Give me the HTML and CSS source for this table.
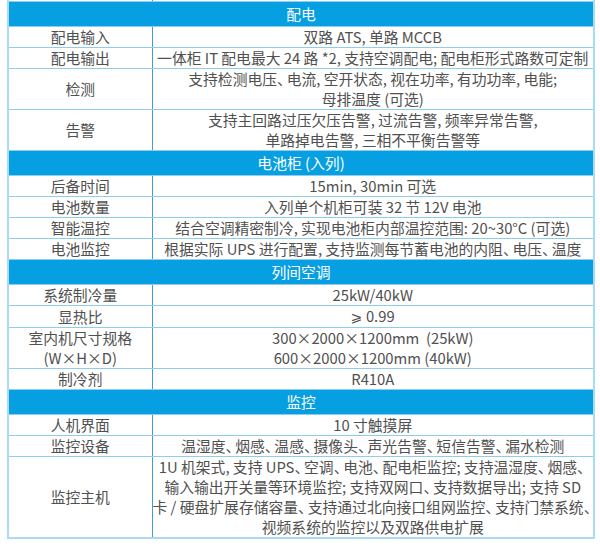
FILE: index.html
```html
<!DOCTYPE html>
<html lang="zh-CN">
<head>
<meta charset="utf-8">
<title>配置表</title>
<link rel="stylesheet" href="styles.css">
</head>
<body>
<table class="spec">
  <colgroup><col class="c1"><col class="c2"></colgroup>
  <tr class="stub"><td></td><td></td></tr>
  <tr class="sec"><td colspan="2">配电</td></tr>
  <tr><td>配电输入</td><td>双路 ATS, 单路 MCCB</td></tr>
  <tr><td>配电输出</td><td>一体柜 IT 配电最大 24 路 *2, 支持空调配电; 配电柜形式路数可定制</td></tr>
  <tr><td>检测</td><td>支持检测电压<span class="d">、</span>电流, 空开状态, 视在功率, 有功功率, 电能;<br>母排温度 (可选)</td></tr>
  <tr><td>告警</td><td>支持主回路过压欠压告警, 过流告警, 频率异常告警,<br>单路掉电告警, 三相不平衡告警等</td></tr>
  <tr class="sec"><td colspan="2">电池柜 (入列)</td></tr>
  <tr><td>后备时间</td><td>15min, 30min 可选</td></tr>
  <tr><td>电池数量</td><td>入列单个机柜可装 32 节 12V 电池</td></tr>
  <tr><td>智能温控</td><td>结合空调精密制冷, 实现电池柜内部温控范围: 20~30°C (可选)</td></tr>
  <tr><td>电池监控</td><td>根据实际 UPS 进行配置, 支持监测每节蓄电池的内阻<span class="d">、</span>电压<span class="d">、</span>温度</td></tr>
  <tr class="sec"><td colspan="2">列间空调</td></tr>
  <tr><td>系统制冷量</td><td>25kW/40kW</td></tr>
  <tr><td>显热比</td><td><span class="ge">⩾</span> 0.99</td></tr>
  <tr><td>室内机尺寸规格<br>(W×H×D)</td><td>300×2000×1200mm &nbsp;(25kW)<br>600×2000×1200mm (40kW)</td></tr>
  <tr><td>制冷剂</td><td>R410A</td></tr>
  <tr class="sec"><td colspan="2">监控</td></tr>
  <tr><td>人机界面</td><td>10 寸触摸屏</td></tr>
  <tr><td>监控设备</td><td>温湿度<span class="d">、</span>烟感<span class="d">、</span>温感<span class="d">、</span>摄像头<span class="d">、</span>声光告警<span class="d">、</span>短信告警<span class="d">、</span>漏水检测</td></tr>
  <tr><td>监控主机</td><td>1U 机架式, 支持 UPS<span class="d">、</span>空调<span class="d">、</span>电池<span class="d">、</span>配电柜监控; 支持温湿度<span class="d">、</span>烟感<span class="d">、</span><br>输入输出开关量等环境监控; 支持双网口<span class="d">、</span>支持数据导出; 支持 SD<br>卡 / 硬盘扩展存储容量<span class="d">、</span>支持通过北向接口组网监控<span class="d">、</span>支持门禁系统<span class="d">、</span><br>视频系统的监控以及双路供电扩展</td></tr>
</table>
</body>
</html>
```

FILE: styles.css
```css
html, body {
  margin: 0;
  padding: 0;
  background: #ffffff;
}

.spec {
  margin-left: 7px;
  width: 588px;
  border-collapse: collapse;
  table-layout: fixed;
  border: 2px solid #a9dbf5;
  border-top: none;
  font-family: "Noto Sans CJK SC", "Noto Sans", sans-serif;
  font-weight: 400;
  font-size: 14.8px;
  font-feature-settings: "halt";
  color: #505050;
}

.c1 { width: 144px; }

.spec td {
  padding: 0;
  line-height: 20px;
  text-align: center;
  vertical-align: middle;
  white-space: nowrap;
  overflow: hidden;
  border-top: 1px solid #8ccdf0;
  border-bottom: 1px solid #8ccdf0;
}

.spec td:first-child {
  border-right: 1px solid #3d9ddf;
}

.spec tr.stub td {
  height: 1px;
  line-height: 1px;
  padding: 0;
  border-top: none;
}

.spec tr.sec td {
  background: #069fe2;
  color: #ffffff;
  line-height: 24px;
  border-right: none;
}

.d {
  margin-right: 2.2px;
}

.ge {
  font-family: "DejaVu Sans", sans-serif;
  font-size: 14px;
}
```
